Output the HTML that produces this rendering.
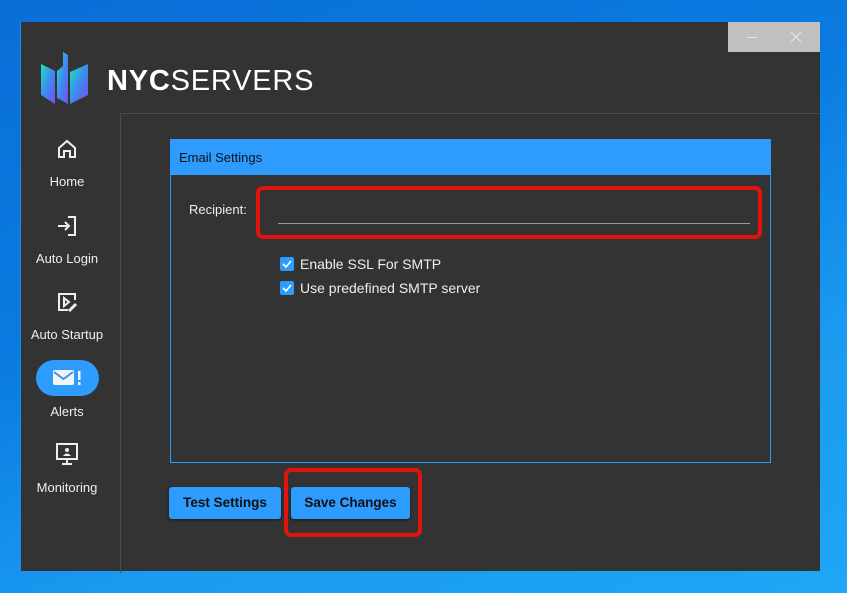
<!DOCTYPE html>
<html><head><meta charset="utf-8"><style>
*{margin:0;padding:0;box-sizing:border-box}
body{width:847px;height:593px;overflow:hidden;position:relative;font-family:"Liberation Sans",sans-serif;
background:linear-gradient(160deg,#0a6fd8 0%,#0a7be0 40%,#1a9af0 70%,#1fa6f5 100%);}
.win{position:absolute;left:20px;top:22px;width:800px;height:549px;background:#333;border-left:1px solid #1a8ae8}
.abs{position:absolute}
.lbl{position:absolute;color:#eee;font-size:13px;width:100px;text-align:center;left:-4px}
.btn{position:absolute;top:465px;height:32px;background:#2e9bfe;color:#111;font-size:13.5px;font-weight:bold;border-radius:3px;text-align:center;line-height:32px;box-shadow:0 1px 3px rgba(0,0,0,.5)}
.cb{position:absolute;left:259px;width:14px;height:14px;background:#2e9bfe;border-radius:2px}
.ct{position:absolute;left:279px;color:#eee;font-size:14px}
</style></head><body>
<div class="win">
 <div class="abs" style="left:707px;top:0;width:92px;height:30px;background:#c0c0c0"></div>
 <div class="abs" style="left:726px;top:15px;width:10px;height:1px;background:#e8e8e8"></div>
 <svg class="abs" style="left:769px;top:9px" width="12" height="12"><path d="M1 1L11 11M11 1L1 11" stroke="#e8e8e8" stroke-width="1"/></svg>
 <svg class="abs" style="left:20px;top:30px" width="48" height="54" viewBox="0 0 48 54">
  <defs><linearGradient id="g" x1="0" y1="0" x2="1" y2="1"><stop offset="0" stop-color="#1de6b8"/><stop offset=".5" stop-color="#3a8cf0"/><stop offset="1" stop-color="#7a4cf0"/></linearGradient></defs>
  <path d="M0 12L14 19V52L0 43Z" fill="url(#g)"/>
  <path d="M16 19L22 14V0L27 3V52L16 46Z" fill="url(#g)"/>
  <path d="M29 52L47 43V12L29 20Z" fill="url(#g)"/>
 </svg>
 <div class="abs" style="left:86px;top:43px;color:#fff;font-size:29px;letter-spacing:0.8px"><b>NYC</b><span style="font-weight:300">SERVERS</span></div>
 <div class="abs" style="left:99px;top:91px;width:1px;height:460px;background:#4a4a4a"></div>
 <div class="abs" style="left:99px;top:91px;width:700px;height:1px;background:#4a4a4a"></div>
 <svg class="abs" style="left:35px;top:116px" width="22" height="22" viewBox="0 0 22 22" fill="none" stroke="#eee" stroke-width="2"><path d="M3 10L11 3L19 10V19H14V13H8V19H3Z"/></svg>
 <div class="lbl" style="top:152px">Home</div>
 <svg class="abs" style="left:35px;top:193px" width="22" height="22" viewBox="0 0 22 22" fill="none" stroke="#eee" stroke-width="2"><path d="M12 2H19V20H12M2 11H13M9 7L13 11L9 15"/></svg>
 <div class="lbl" style="top:229px">Auto Login</div>
 <svg class="abs" style="left:35px;top:269px" width="22" height="22" viewBox="0 0 22 22" fill="none" stroke="#eee" stroke-width="2"><path d="M12 19H3V3H19V9M8 7V15L13 11Z"/><path d="M13 20L20 13" stroke-width="3"/></svg>
 <div class="lbl" style="top:305px">Auto Startup</div>
 <div class="abs" style="left:15px;top:338px;width:63px;height:36px;border-radius:18px;background:#2e9bfe"></div>
 <svg class="abs" style="left:31px;top:346px" width="32" height="20" viewBox="0 0 32 20"><rect x="1" y="2" width="21" height="15" rx="2" fill="#f4f4f4"/><path d="M2 4L11.5 11L21 4" fill="none" stroke="#2e9bfe" stroke-width="2"/><rect x="26" y="3" width="2.5" height="9" fill="#f4f4f4"/><rect x="26" y="14" width="2.5" height="3" fill="#f4f4f4"/></svg>
 <div class="lbl" style="top:382px">Alerts</div>
 <svg class="abs" style="left:34px;top:420px" width="24" height="24" viewBox="0 0 24 24" fill="none" stroke="#eee" stroke-width="2"><rect x="2" y="2" width="20" height="15"/><path d="M12 17V21M7 22H17"/><circle cx="12" cy="8" r="2" fill="#eee" stroke="none"/><path d="M8 14Q12 9 16 14" fill="#eee" stroke="none"/></svg>
 <div class="lbl" style="top:458px">Monitoring</div>
 <div class="abs" style="left:149px;top:117px;width:601px;height:324px;border:1px solid #2e9bfe"></div>
 <div class="abs" style="left:149px;top:117px;width:601px;height:36px;background:#2e9bfe;color:#111;font-size:13px;padding:11px 9px">Email Settings</div>
 <div class="abs" style="left:168px;top:180px;color:#eee;font-size:13px">Recipient:</div>
 <div class="abs" style="left:257px;top:201px;width:472px;height:1px;background:#9a9a9a"></div>
 <div class="abs" style="left:235px;top:164px;width:506px;height:53px;border:4px solid #e0140e;border-radius:7px"></div>
 <div class="cb" style="top:235px"></div><svg class="abs" style="left:261px;top:238px" width="10" height="8"><path d="M1 4L4 7L9 1" fill="none" stroke="#fff" stroke-width="1.6"/></svg>
 <div class="ct" style="top:234px">Enable SSL For SMTP</div>
 <div class="cb" style="top:259px"></div><svg class="abs" style="left:261px;top:262px" width="10" height="8"><path d="M1 4L4 7L9 1" fill="none" stroke="#fff" stroke-width="1.6"/></svg>
 <div class="ct" style="top:258px">Use predefined SMTP server</div>
 <div class="btn" style="left:148px;width:112px">Test Settings</div>
 <div class="btn" style="left:270px;width:119px">Save Changes</div>
 <div class="abs" style="left:263px;top:446px;width:138px;height:69px;border:4px solid #e0140e;border-radius:7px"></div>
</div>
</body></html>
